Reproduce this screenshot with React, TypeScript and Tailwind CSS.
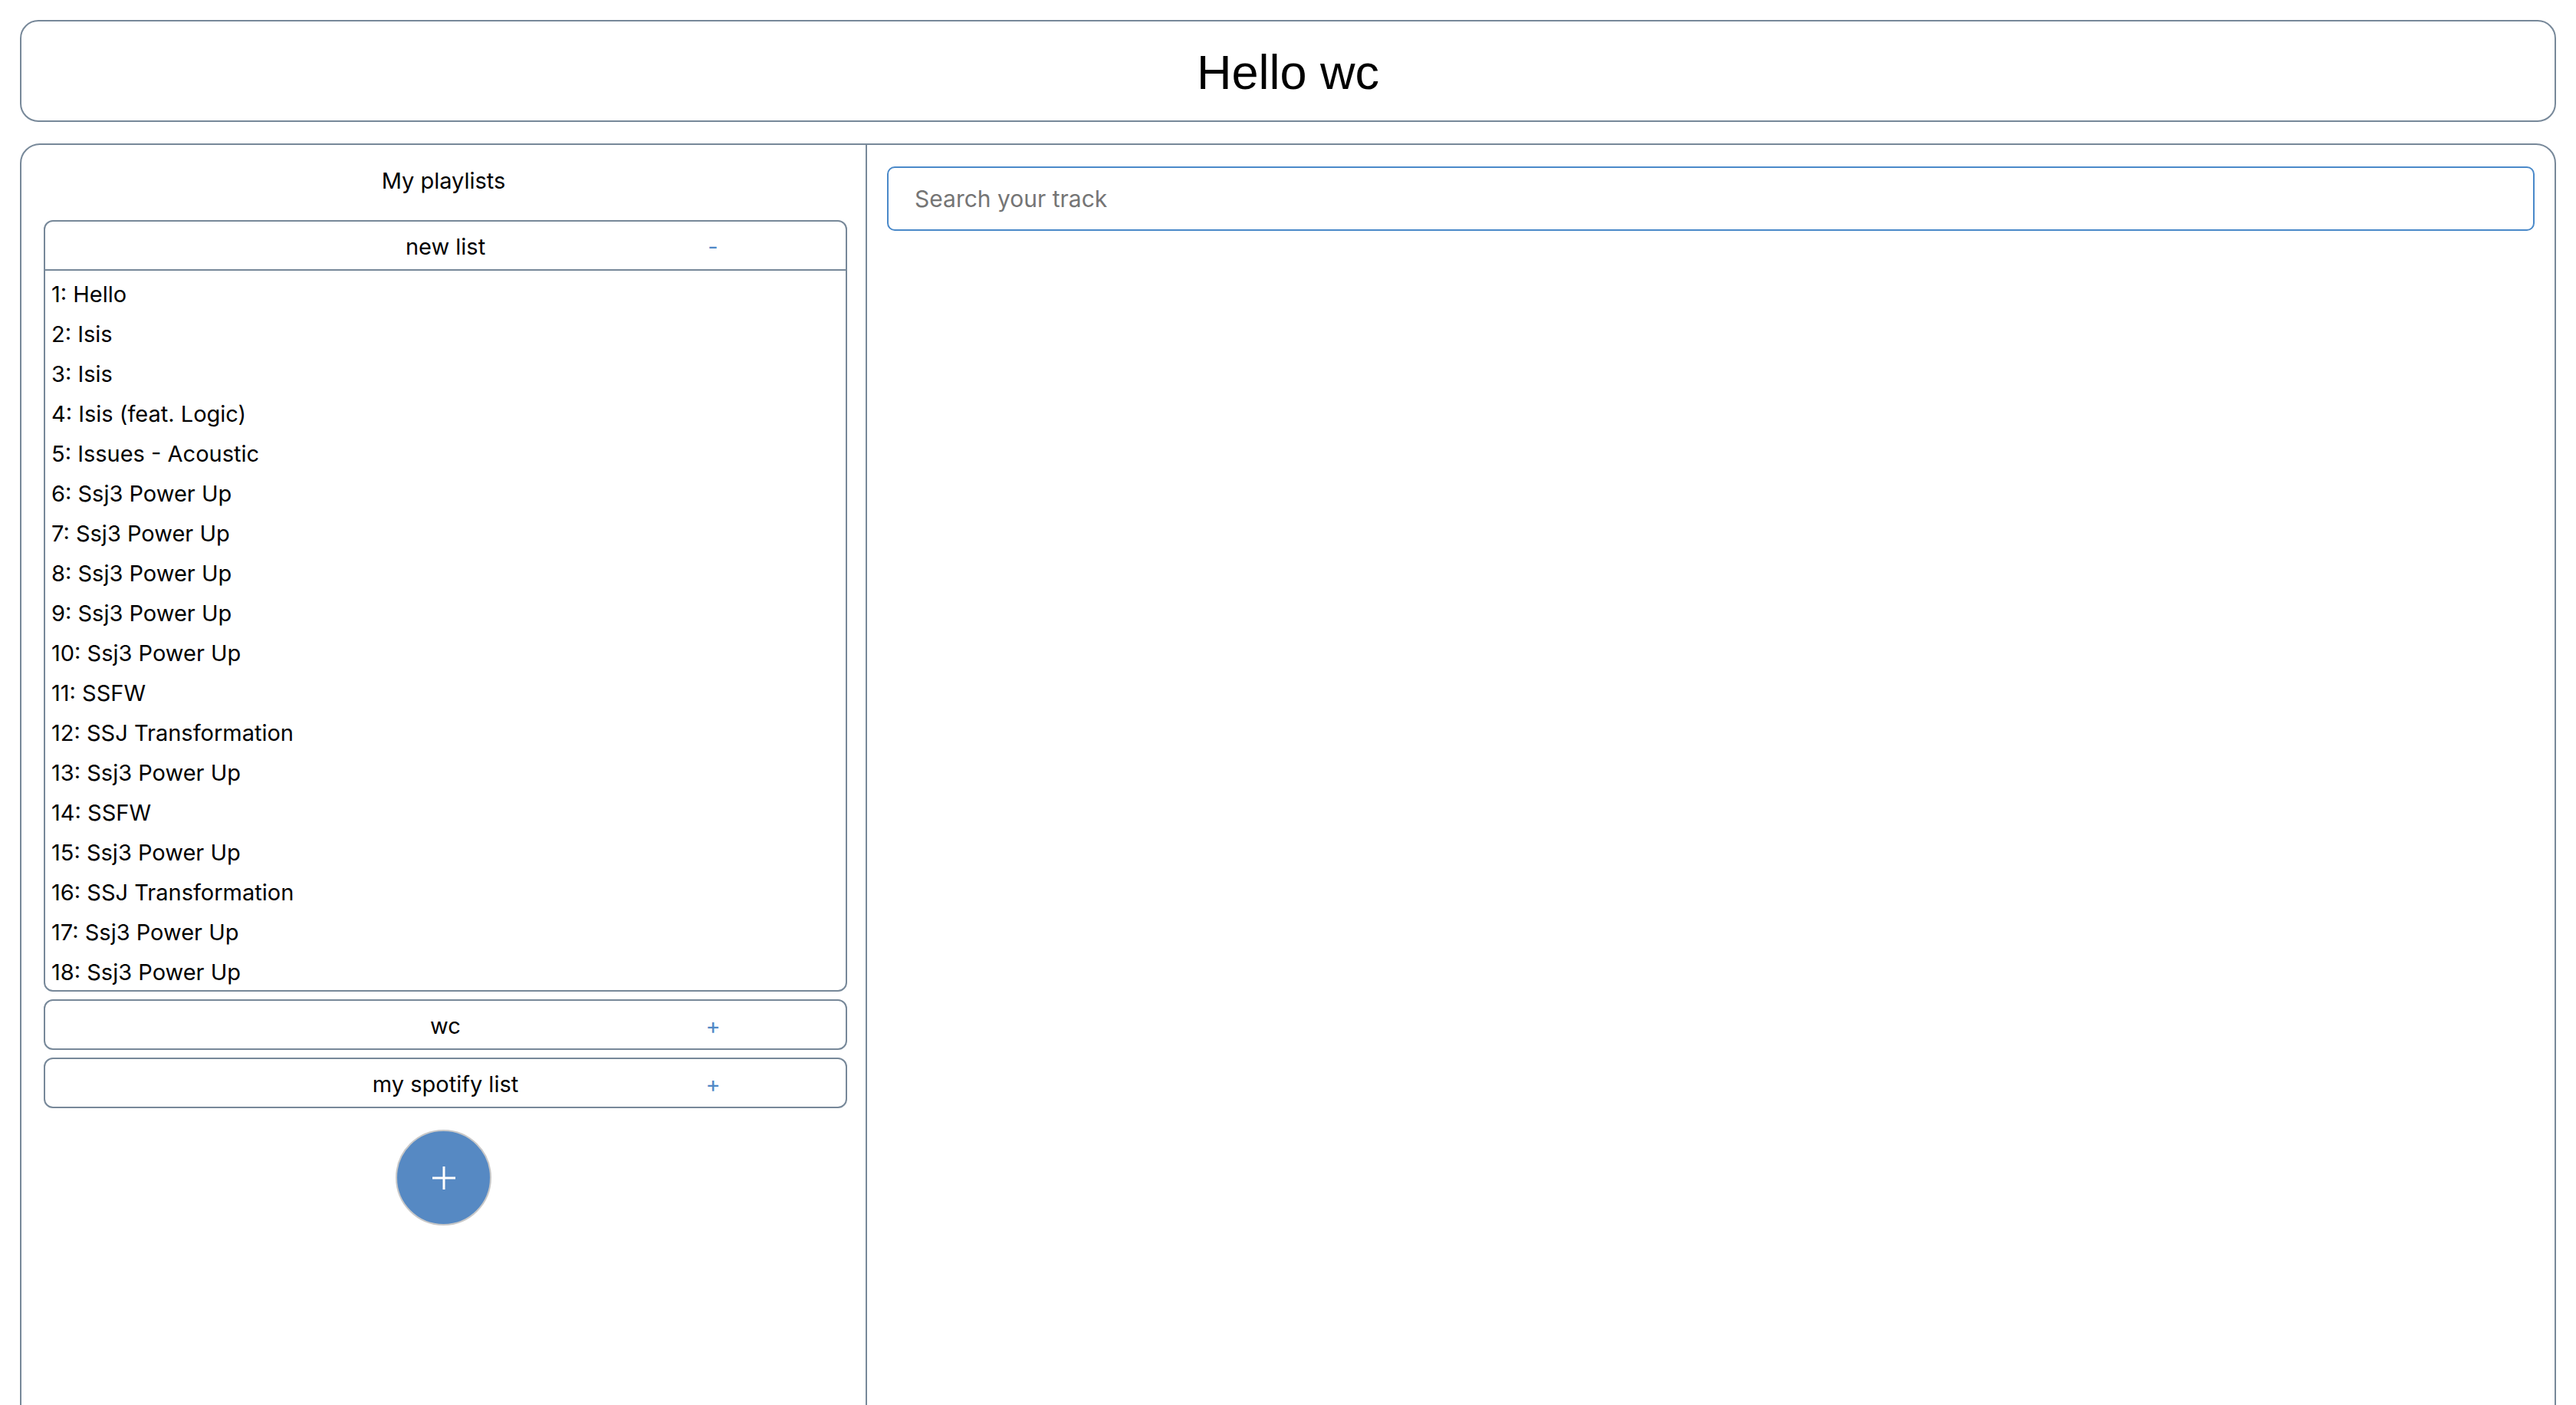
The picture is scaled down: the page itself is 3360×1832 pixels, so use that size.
import { useState } from 'react';

const tracks = [
  'Hello',
  'Isis',
  'Isis',
  'Isis (feat. Logic)',
  'Issues - Acoustic',
  'Ssj3 Power Up',
  'Ssj3 Power Up',
  'Ssj3 Power Up',
  'Ssj3 Power Up',
  'Ssj3 Power Up',
  'SSFW',
  'SSJ Transformation',
  'Ssj3 Power Up',
  'SSFW',
  'Ssj3 Power Up',
  'SSJ Transformation',
  'Ssj3 Power Up',
  'Ssj3 Power Up',
];

const playlists = [
  { name: 'new list', tracks },
  { name: 'wc', tracks: [] as string[] },
  { name: 'my spotify list', tracks: [] as string[] },
];

function Playlist({ name, items, open, onToggle }: { name: string; items: string[]; open: boolean; onToggle: () => void }) {
  return (
    <div className="border-2 border-[#778899] rounded-[12px] overflow-hidden">
      <div
        className={`relative h-[62px] pt-[4px] flex items-center justify-center cursor-pointer ${open ? 'h-[64px] border-b-2 border-[#778899]' : ''}`}
        onClick={onToggle}
      >
        <span>{name}</span>
        <span className="absolute left-[856px] w-[30px] text-center text-[#4f88c6]">{open ? '-' : '+'}</span>
      </div>
      {open && (
        <ul className="pt-[5px] -mb-[3px] pl-[8px]">
          {items.map((t, i) => (
            <li key={i} className="h-[52px] leading-[52px]">
              {i + 1}: {t}
            </li>
          ))}
        </ul>
      )}
    </div>
  );
}

export default function App() {
  const [openIdx, setOpenIdx] = useState<number | null>(0);

  return (
    <div
      className="h-[1832px] overflow-hidden bg-white px-[26px] pt-[26px] text-black text-[29px]"
      style={{ fontFamily: 'Inter, "Noto Sans", sans-serif' }}
    >
      <header className="h-[133px] border-2 border-[#778899] rounded-[24px] flex items-center justify-center">
        <h1 className="text-[63px] pt-[4px]" style={{ fontFamily: '"Liberation Sans", Arial, sans-serif' }}>
          Hello wc
        </h1>
      </header>

      <main className="mt-[28px] h-[1720px] border-2 border-[#778899] rounded-[26px] flex">
        <section className="w-[1103px] shrink-0 border-r-2 border-[#778899]">
          <h2 className="pt-[21px] h-[72px] leading-[52px] text-center">My playlists</h2>
          <div className="mt-[26px] ml-[29px] mr-[24px] flex flex-col gap-[10px]">
            {playlists.map((p, i) => (
              <Playlist
                key={p.name}
                name={p.name}
                items={p.tracks}
                open={openIdx === i}
                onToggle={() => setOpenIdx(openIdx === i ? null : i)}
              />
            ))}
          </div>
          <div className="mt-[28px] flex justify-center">
            <button className="w-[125px] h-[125px] rounded-full bg-[#5689c3] border-2 border-[#c8c8c8] flex items-center justify-center">
              <svg width="32" height="32" viewBox="0 0 32 32">
                <path d="M16 1v30M1 16h30" stroke="white" strokeWidth="3" />
              </svg>
            </button>
          </div>
        </section>

        <section className="flex-1 pl-[26px] pr-[26px] pt-[28px]">
          <input
            placeholder="Search your track"
            className="w-full h-[84px] border-2 border-[#4a89c9] rounded-[10px] pl-[34px] text-[30px] outline-none placeholder:text-[#757575]"
          />
        </section>
      </main>
    </div>
  );
}
